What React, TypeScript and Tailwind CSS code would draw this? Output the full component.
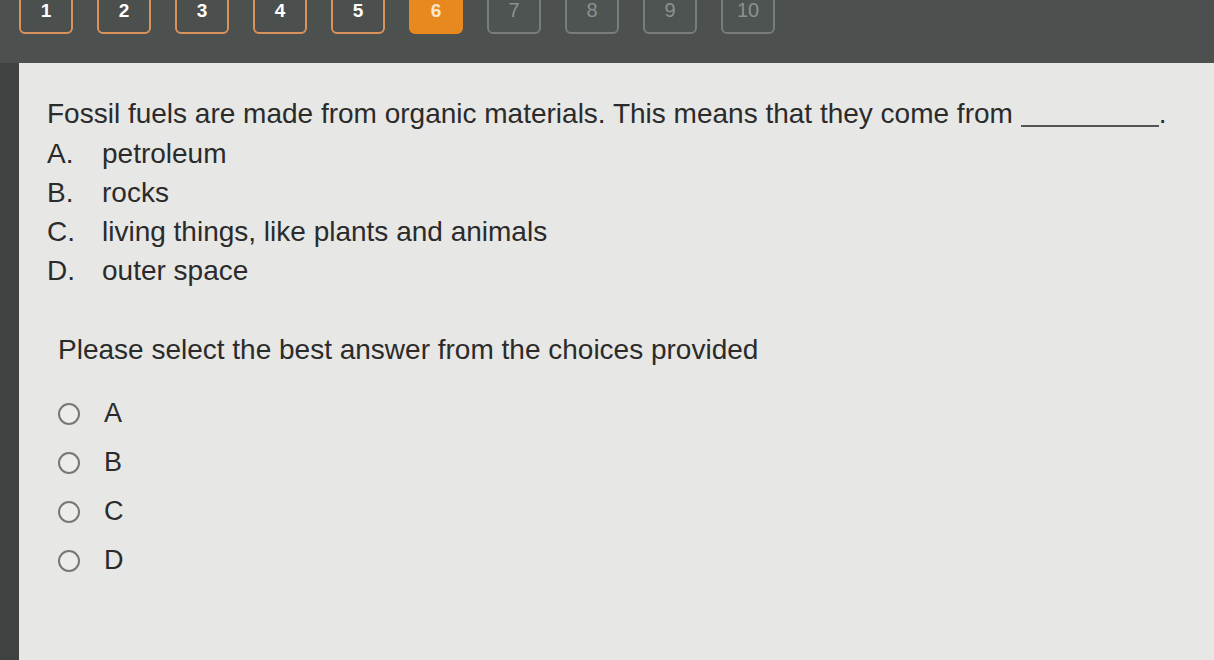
const steps = [1, 2, 3, 4, 5, 6, 7, 8, 9, 10];
const current = 6;

const choices = [
  { key: "A", text: "petroleum" },
  { key: "B", text: "rocks" },
  { key: "C", text: "living things, like plants and animals" },
  { key: "D", text: "outer space" },
];

function StepButton({ n }: { n: number }) {
  const done = n < current;
  const active = n === current;
  const base =
    "flex h-[46px] w-[54px] items-end justify-center rounded-md border-2 pb-[12px] text-[19px] font-bold leading-none";
  if (active) {
    return (
      <div className={`${base} border-[#e8891f] bg-[#e8891f] text-[#fbe7cf]`}>
        {n}
      </div>
    );
  }
  if (done) {
    return (
      <div className={`${base} border-[#d9935a] bg-[#4b4f4e] text-white`}>
        {n}
      </div>
    );
  }
  return (
    <div
      className={`${base} border-[#787d7b] bg-[#4e5452] text-[20px] font-normal text-[#8c918f]`}
    >
      {n}
    </div>
  );
}

export default function App() {
  return (
    <div
      className="flex h-[660px] w-[1214px] flex-col overflow-hidden bg-[#4c5150] text-[#2b2b2b]"
      style={{ fontFamily: '"Liberation Sans", Arial, sans-serif' }}
    >
      {/* question navigator */}
      <div className="flex h-[63px] shrink-0 pl-[19px]">
        <div className="-mt-[12px] flex gap-[24px]">
          {steps.map((n) => (
            <StepButton key={n} n={n} />
          ))}
        </div>
      </div>

      <div className="flex flex-1">
        <div className="w-[19px] shrink-0 bg-[#3f4241]" />
        <div className="flex-1 bg-[#e7e7e5] pl-[28px] pt-[34px]">
          <p className="text-[28px] leading-[34px]">
            Fossil fuels are made from organic materials. This means that they
            come from{" "}
            <span className="inline-block w-[138px] translate-y-[4px] border-b-2 border-[#555]" />
            .
          </p>
          <ol className="mt-[3px] flex flex-col">
            {choices.map((c) => (
              <li key={c.key} className="flex h-[39px] items-center text-[28px]">
                <span className="w-[55px]">{c.key}.</span>
                <span>{c.text}</span>
              </li>
            ))}
          </ol>

          <p className="mt-[43px] pl-[11px] text-[28px] leading-[34px]">
            Please select the best answer from the choices provided
          </p>

          <div className="mt-[22px] flex flex-col pl-[11px]">
            {choices.map((c) => (
              <label key={c.key} className="flex h-[49px] items-center">
                <span className="h-[22px] w-[22px] rounded-full border-2 border-[#777] bg-[#ececea]" />
                <span className="ml-[24px] text-[27px]">{c.key}</span>
              </label>
            ))}
          </div>
        </div>
      </div>
    </div>
  );
}
